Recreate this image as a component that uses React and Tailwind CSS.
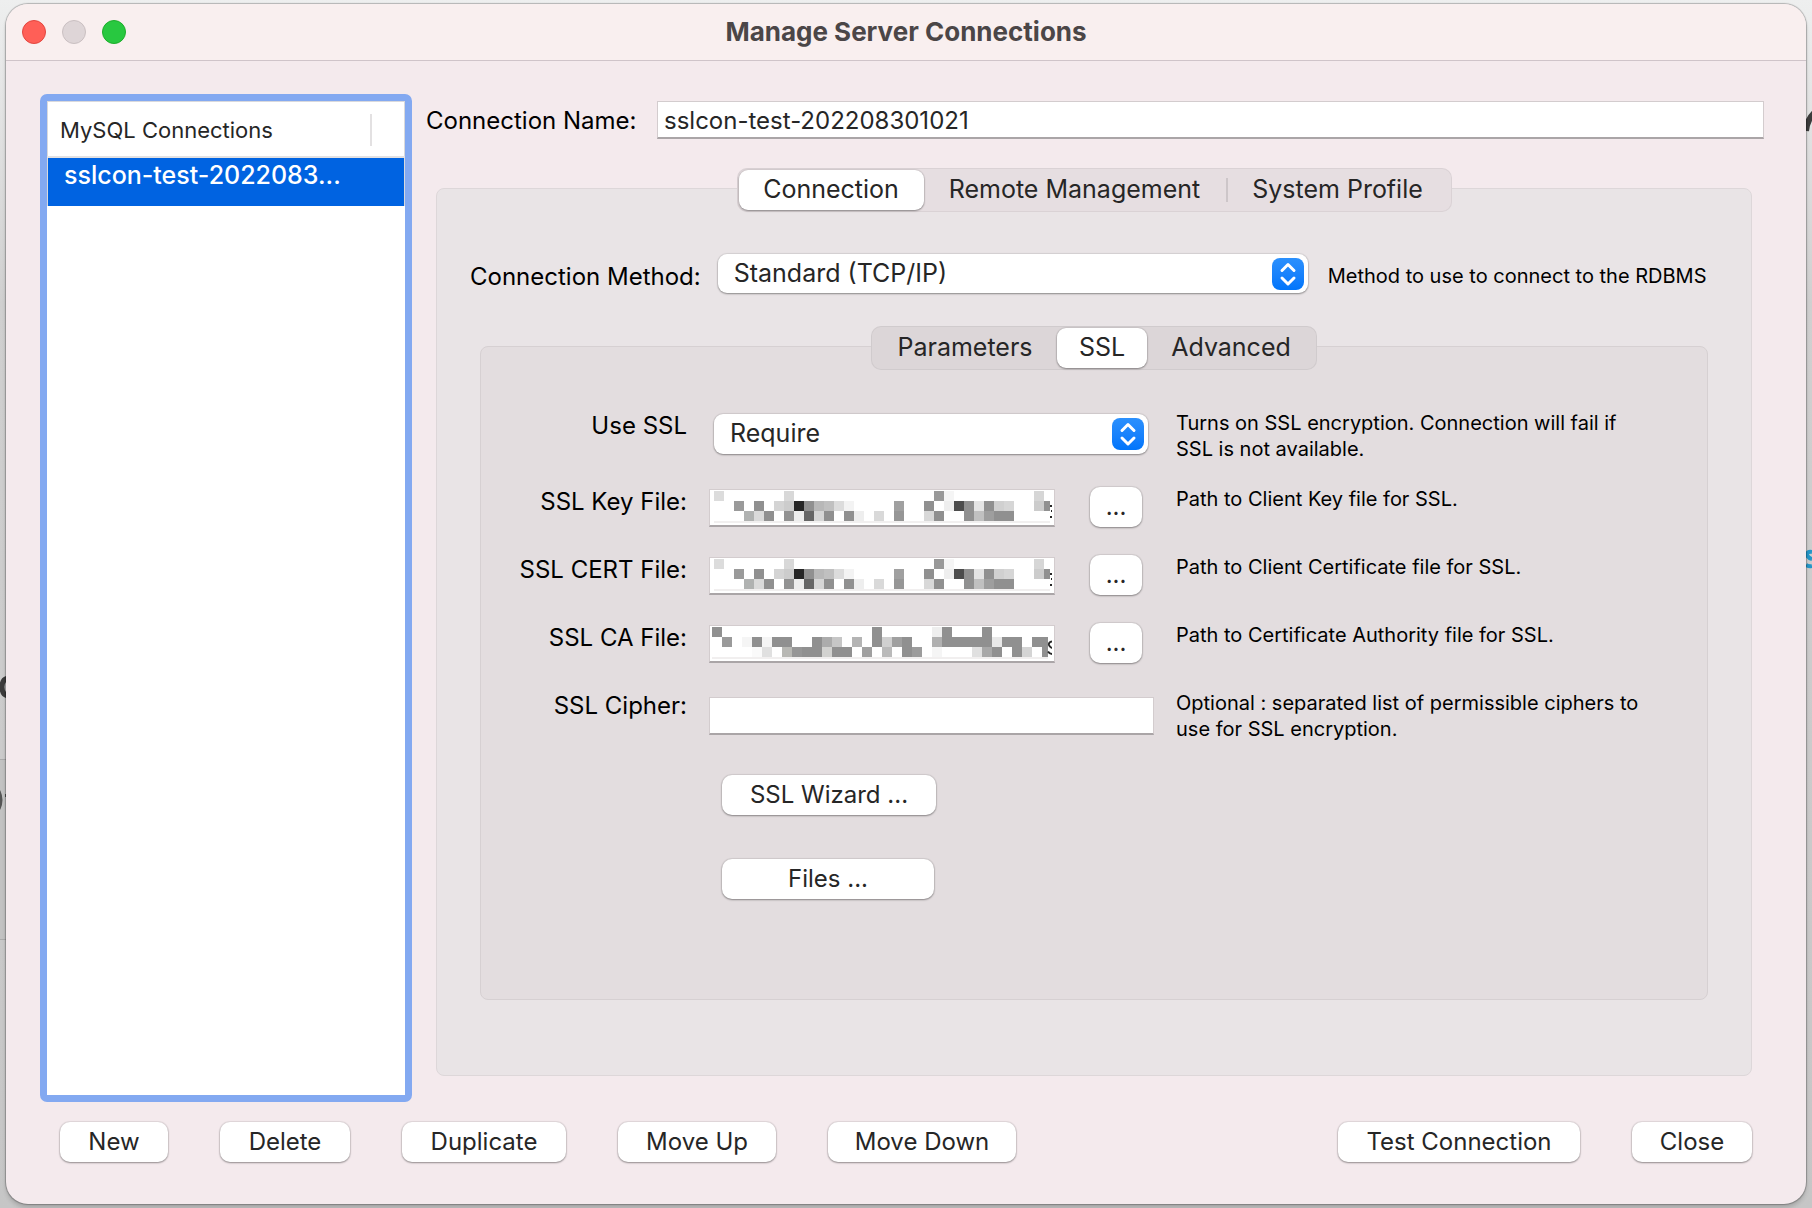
import { useState } from "react";

const BUTTON =
  "h-10 rounded-[10px] bg-white pb-px text-center text-2xl leading-7 text-[#262626] shadow-[0_0_1px_1px_rgba(0,0,0,0.08),0_1px_2px_rgba(0,0,0,0.35)]";
const FIELD =
  "h-[38px] border border-b-2 border-[#d3ccce] border-b-[#aaa5a7] bg-white px-1.5 pt-0.5 text-2xl text-[#262626] outline-none";
const HINT = "text-[20px] leading-[26px] text-black";

const g = "#909090";
// Each entry: [column, row, fill, columns spanned]
const KEY_CELLS = [
  [0, 0, "#dcdcdc"], [7, 0, "#d8d8d8"], [22, 0, "#999999"], [23, 0, "#f5f5f5"], [32, 0, "#d6d6d6"],
  [2, 1, "#9a9a9a"], [4, 1, g], [6, 1, "#d4d4d4"], [7, 1, "#cccccc"], [8, 1, "#262626"], [9, 1, g],
  [10, 1, "#b8b8b8"], [11, 1, "#c0c0c0"], [12, 1, "#dcdcdc"], [13, 1, "#f3f3f3"], [18, 1, "#a0a0a0"],
  [21, 1, g], [23, 1, "#eeeeee"], [24, 1, "#4c4c4c"], [25, 1, g], [26, 1, "#e4e4e4"], [27, 1, g],
  [28, 1, "#d0d0d0"], [29, 1, "#d6d6d6"], [32, 1, "#cccccc"], [33, 1, g],
  [3, 2, "#b0b2b1"], [4, 2, "#dadada"], [5, 2, g], [7, 2, "#929292"], [8, 2, "#ededed"], [9, 2, "#666666"],
  [10, 2, "#d6d6d6"], [11, 2, g], [13, 2, g], [14, 2, "#eeeeee"], [16, 2, "#d9d9d9"], [18, 2, "#969696"],
  [21, 2, "#d8d8d8"], [22, 2, g], [25, 2, g], [26, 2, "#c0c0c0"], [27, 2, "#9e9e9e"], [28, 2, g, 2],
];
const CA_CELLS = [
  [0, 0, g], [16, 0, g], [22, 0, "#eeeeee"], [23, 0, g], [27, 0, g],
  [1, 1, "#9a9a9a"], [3, 1, "#f5f5f5"], [4, 1, g], [5, 1, "#f5f5f5"], [6, 1, g, 2], [10, 1, g],
  [11, 1, "#acacac"], [12, 1, "#c6c6c6"], [14, 1, "#b4b4b4"], [16, 1, g], [17, 1, "#d0d0d0"],
  [18, 1, "#a0a0a0"], [19, 1, g], [22, 1, "#b0b0b0"], [23, 1, g, 5], [28, 1, "#e8e8e8"], [29, 1, g, 2], [32, 1, g, 2],
  [4, 2, "#fafafa"], [5, 2, "#e0e0e0"], [7, 2, "#b8b8b4"], [8, 2, "#969696"], [9, 2, g, 2], [11, 2, "#d2d2d0"],
  [12, 2, g, 2], [15, 2, "#a0a0a0"], [17, 2, "#bababa"], [19, 2, g], [20, 2, "#9c9c9c"], [22, 2, "#f5f5f5"],
  [26, 2, "#e0e0e0"], [27, 2, "#a8a8a8"], [28, 2, g], [30, 2, g], [31, 2, "#d4d4d4"], [33, 2, g],
];

function Mosaic({ cells, className, tail }) {
  return (
    <svg className={className} width="340" height="32" viewBox="0 0 340 32" shapeRendering="crispEdges" aria-hidden="true">
      <svg width="336" height="32">
        {cells.map(([x, y, fill, span = 1]) => (
          <rect key={`${x}-${y}`} x={x * 10} y={y * 10} width={span * 10} height="10" fill={fill} />
        ))}
        <rect x="0" y="30" width="336" height="2" fill="#f1efef" />
      </svg>
      {tail}
    </svg>
  );
}

const dots = (
  <g fill="#262626">
    <rect x="336" y="14" width="2" height="2" />
    <rect x="337" y="19" width="1" height="2" />
    <rect x="336" y="25" width="2" height="2" />
  </g>
);
const curl = (
  <g fill="none" stroke="#262626" strokeWidth="2" shapeRendering="auto">
    <path d="M340 14.5 Q336.500 15 337 18 Q337.500 20 340 21" />
    <path d="M336 24.500 Q337.500 27 340 27" />
  </g>
);

function Tabs({ label, items, value, onChange, className }) {
  return (
    <div role="tablist" aria-label={label} className={`mx-auto flex h-11 w-fit items-center rounded-[10px] border border-black/5 px-px ${className}`}>
      {items.map(({ name, width, divider }) => (
        <button
          key={name}
          type="button"
          role="tab"
          aria-selected={value === name}
          onClick={() => onChange(name)}
          className={`relative h-10 rounded-[9px] pb-0.5 text-[25px] leading-8 text-[#262626] ${width} ${
            value === name ? "bg-white shadow-[0_0_1px_1px_rgba(0,0,0,0.08),0_1px_2px_rgba(0,0,0,0.35)]" : ""
          }`}
        >
          {divider && <span className="absolute top-2 left-0 h-6 w-0.5 bg-[#cdc6c9]" />}
          {name}
        </button>
      ))}
    </div>
  );
}

function Select({ id, options, className }) {
  return (
    <div className={`relative ${className}`}>
      <select
        id={id}
        className="h-full w-full appearance-none rounded-[9px] bg-white pr-12 pb-0.5 pl-4 text-[25px] leading-8 text-[#262626] shadow-[0_0_1px_1px_rgba(0,0,0,0.08),0_1px_2px_rgba(0,0,0,0.35)] outline-none"
      >
        {options.map((o) => (
          <option key={o}>{o}</option>
        ))}
      </select>
      <span className="pointer-events-none absolute inset-y-0 right-1 flex items-center">
        <svg className="rounded-[8px] bg-linear-to-b from-[#2b90fd] to-[#0075fb]" width="32" height="32" viewBox="0 0 32 32" fill="none" stroke="white" strokeWidth="3" strokeLinecap="round" strokeLinejoin="round" aria-hidden="true">
          <path d="M10 12.500 L16 6.500 L22 12.500" />
          <path d="M10 20 L16 26 L22 20" />
        </svg>
      </span>
    </div>
  );
}

function Row({ id, label, hint, className, children }) {
  return (
    <div className={`grid grid-cols-[206px_445px_1fr] gap-x-[22px] ${className}`}>
      <label htmlFor={id} className="pt-0.5 text-right text-2xl leading-7 text-black">
        {label}
      </label>
      <div>{children}</div>
      <p className={`max-w-[476px] ${HINT}`}>{hint}</p>
    </div>
  );
}

function FileRow({ id, label, hint, mosaic }) {
  return (
    <Row id={id} label={label} hint={hint} className="h-[68px]">
      <div className="flex justify-between pr-3">
        <div className="relative pt-[3px]">
          <input id={id} type="text" className={`w-[346px] ${FIELD}`} />
          {mosaic}
        </div>
        <button type="button" aria-label={`Browse ${label}`} className={`mt-px w-[52px] ${BUTTON}`}>
          ...
        </button>
      </div>
    </Row>
  );
}

export default function App() {
  const [tab, setTab] = useState("Connection");
  const [sub, setSub] = useState("SSL");

  return (
    <div className="relative flex min-h-screen flex-col overflow-hidden bg-linear-to-b from-[#eeefef] via-[#d0d0d0] via-25% to-[#c6c6c6] px-1.5 py-1 font-['Inter','Liberation_Sans',sans-serif]">
      <svg className="absolute top-0 left-0" width="6" height="1208" aria-hidden="true">
        <rect y="759" width="6" height="180" fill="#c2c2c2" />
        <rect y="759" width="6" height="1" fill="#aaaaaa" />
        <rect y="939" width="6" height="1" fill="#aaaaaa" />
        <path d="M10 678 Q2 678 2 687 Q2 696 10 696" fill="none" stroke="#3c3c3c" strokeWidth="5" />
        <path d="M-1 791 Q3 800 -1 809" fill="none" stroke="#555555" strokeWidth="3" />
        <rect x="5" y="794" width="1" height="3" fill="#555555" />
      </svg>
      <svg className="absolute top-0 right-0" width="6" height="600" aria-hidden="true">
        <path d="M0 131 Q1 120 8 113" fill="none" stroke="#3c3c3c" strokeWidth="6" />
        <path d="M6 552 Q1 551 1 555 Q2 558 6 559 M0 565 Q3 567 6 566" fill="none" stroke="#2596c8" strokeWidth="4" />
      </svg>

      <main className="relative flex flex-1 flex-col overflow-hidden rounded-[22px] bg-[#f4eaed] shadow-[0_0_1px_1px_rgba(0,0,0,0.25),0_4px_4px_rgba(0,0,0,0.15)]">
        <header className="flex h-[57px] items-center border-b border-[#cfc4c9] bg-[#f9efef] px-4">
          <div className="flex flex-1 gap-4">
            <button type="button" aria-label="Close window" className="size-6 rounded-full border border-[#e2463f] bg-[#ff5f57]" />
            <button type="button" aria-label="Minimize window" className="size-6 rounded-full border border-[#c9bfc1] bg-[#ded5d7]" />
            <button type="button" aria-label="Zoom window" className="size-6 rounded-full border border-[#1dad2b] bg-[#28c840]" />
          </div>
          <h1 className="text-[26px] leading-8 font-bold text-[#4b4647]">Manage Server Connections</h1>
          <div className="flex-1" />
        </header>

        <div className="flex flex-1 pt-[33px] pr-[42px] pl-[34px]">
          <section className="w-[372px] shrink-0 rounded-[7px] border-[7px] border-[#83a9f1] bg-white">
            <table className="w-full table-fixed border border-[#d9d9dc] border-b-0 text-left">
              <thead>
                <tr className="h-[55px] border-b-2 border-[#e3e1e2]">
                  <th className="pt-0.5 pl-3 text-[22px] leading-7 font-normal text-[#262626]">
                    <div className="flex h-8 w-[312px] items-center border-r-2 border-[#e3e1e2]">MySQL Connections</div>
                  </th>
                </tr>
              </thead>
              <tbody>
                <tr className="h-[49px] bg-[#0063e1]">
                  <td className="truncate pb-3.5 pl-4 text-[25px] leading-8 font-medium text-white">sslcon-test-2022083...</td>
                </tr>
              </tbody>
            </table>
          </section>

          <div className="ml-3.5 flex flex-1 flex-col">
            <div className="mt-[7px] flex items-center">
              <label htmlFor="name" className="w-[231px] pt-0.5 text-2xl leading-7 text-black">
                Connection Name:
              </label>
              <input id="name" type="text" defaultValue="sslcon-test-202208301021" className={`flex-1 ${FIELD}`} />
            </div>

            <section className="mt-[49px] mr-3 mb-[26px] ml-2.5 flex flex-1 flex-col rounded-lg border border-[#ddd7d9] bg-[#e9e4e6]">
              <Tabs
                label="Connection settings"
                value={tab}
                onChange={setTab}
                className="-mt-[21px] bg-[#e6dee1]"
                items={[
                  { name: "Connection", width: "w-[185px]" },
                  { name: "Remote Management", width: "w-[302px]" },
                  { name: "System Profile", width: "w-[224px]", divider: true },
                ]}
              />

              <div className="mt-[42px] flex pr-8 pl-[33px]">
                <label htmlFor="method" className="pt-[9px] text-2xl leading-7 whitespace-nowrap text-black">
                  Connection Method:
                </label>
                <Select id="method" options={["Standard (TCP/IP)"]} className="ml-[17px] h-[39px] w-[590px] shrink-0" />
                <p className={`ml-5 pt-[9px] whitespace-nowrap ${HINT}`}>Method to use to connect to the RDBMS</p>
              </div>

              <section className="mx-[43px] mt-[53px] mb-[75px] flex-1 rounded-lg border border-[#d6d0d2] bg-[#e3dddf]">
                <Tabs
                  label="Connection parameters"
                  value={sub}
                  onChange={setSub}
                  className="-mt-[21px] bg-[#dcd6d8]"
                  items={[
                    { name: "Parameters", width: "w-[184px]" },
                    { name: "SSL", width: "w-[90px]" },
                    { name: "Advanced", width: "w-[168px]" },
                  ]}
                />

                <form className="mt-10" onSubmit={(e) => e.preventDefault()}>
                  <Row id="use" label="Use SSL" className="h-[76px]" hint="Turns on SSL encryption. Connection will fail if SSL is not available.">
                    <Select id="use" options={["Require"]} className="mt-1 ml-[5px] h-10 w-[434px]" />
                  </Row>
                  <FileRow
                    id="key"
                    label="SSL Key File:"
                    hint="Path to Client Key file for SSL."
                    mosaic={<Mosaic cells={KEY_CELLS} tail={dots} className="absolute top-[5px] left-[5px]" />}
                  />
                  <FileRow
                    id="cert"
                    label="SSL CERT File:"
                    hint="Path to Client Certificate file for SSL."
                    mosaic={<Mosaic cells={KEY_CELLS} tail={dots} className="absolute top-[5px] left-[5px]" />}
                  />
                  <FileRow
                    id="ca"
                    label="SSL CA File:"
                    hint="Path to Certificate Authority file for SSL."
                    mosaic={<Mosaic cells={CA_CELLS} tail={curl} className="absolute top-[5px] left-[3px]" />}
                  />
                  <Row id="cipher" label="SSL Cipher:" className="h-[86px]" hint="Optional : separated list of permissible ciphers to use for SSL encryption.">
                    <input id="cipher" type="text" className={`mt-[7px] w-full ${FIELD}`} />
                  </Row>
                  <div className="-mt-px ml-[241px] flex flex-col items-start gap-11">
                    <button type="button" className={`w-[214px] ${BUTTON}`}>SSL Wizard ...</button>
                    <button type="button" className={`w-[212px] ${BUTTON}`}>Files ...</button>
                  </div>
                </form>
              </section>
            </section>
          </div>
        </div>

        <footer className="flex gap-[52px] pt-5 pr-[54px] pb-[42px] pl-[54px]">
          <button type="button" className={`w-[108px] ${BUTTON}`}>New</button>
          <button type="button" className={`w-[130px] ${BUTTON}`}>Delete</button>
          <button type="button" className={`w-[164px] ${BUTTON}`}>Duplicate</button>
          <button type="button" className={`w-[158px] ${BUTTON}`}>Move Up</button>
          <button type="button" className={`w-[188px] ${BUTTON}`}>Move Down</button>
          <button type="button" className={`ml-auto w-[242px] ${BUTTON}`}>Test Connection</button>
          <button type="button" className={`w-[120px] ${BUTTON}`}>Close</button>
        </footer>
      </main>
    </div>
  );
}
